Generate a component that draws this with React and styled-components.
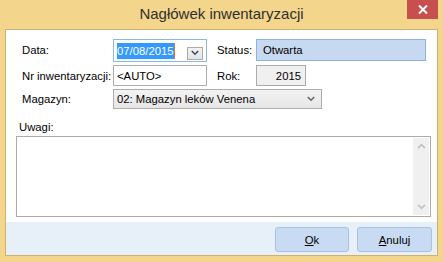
import React from 'react'
import styled, { createGlobalStyle } from 'styled-components'

const GlobalStyle = createGlobalStyle`
  html, body { margin: 0; padding: 0; }
  body {
    width: 443px;
    height: 262px;
    overflow: hidden;
    font-family: "Liberation Sans", Arial, sans-serif;
    font-size: 11.3px;
    color: #000;
  }
`

function Chevron({ up, color, size = 9 }) {
  return (
    <svg width={size} height={Math.round(size * 0.7)} viewBox="0 0 10 7">
      <path
        d={up ? 'M1 6 L5 2 L9 6' : 'M1 1 L5 5 L9 1'}
        fill="none"
        stroke={color}
        strokeWidth="2"
      />
    </svg>
  )
}

export default function App() {
  return (
    <Window>
      <GlobalStyle />
      <TitleBar>
        <Title>Nagłówek inwentaryzacji</Title>
        <Close>
          <svg width="10" height="9" viewBox="0 0 10 9">
            <path d="M1 0.5 L9 8.5 M9 0.5 L1 8.5" stroke="#fff" strokeWidth="2" />
          </svg>
        </Close>
      </TitleBar>

      <Panel>
        <Form>
          <Fields>
            <Label>Data:</Label>
            <DateBox>
              <Selected>07/08/2015</Selected>
              <DropButton>
                <Chevron color="#3f4d60" size={8} />
              </DropButton>
            </DateBox>
            <SideLabel>Status:</SideLabel>
            <StatusBox>Otwarta</StatusBox>

            <Label>Nr inwentaryzacji:</Label>
            <Input>&lt;AUTO&gt;</Input>
            <SideLabel>Rok:</SideLabel>
            <ReadOnly>2015</ReadOnly>

            <Label>Magazyn:</Label>
            <Select>
              <span>02: Magazyn leków Venena</span>
              <Chevron color="#666" size={8} />
            </Select>
          </Fields>

          <NotesLabel>Uwagi:</NotesLabel>
          <Notes>
            <Scrollbar>
              <Chevron up color="#c2c2c2" size={9} />
              <Chevron color="#c2c2c2" size={9} />
            </Scrollbar>
          </Notes>
        </Form>

        <Footer>
          <Button $w={74}><u>O</u>k</Button>
          <Button $w={75}><u>A</u>nuluj</Button>
        </Footer>
      </Panel>
    </Window>
  )
}

const Window = styled.div`
  width: 443px;
  height: 262px;
  background: #f3d68b;
  display: flex;
  flex-direction: column;
`

const TitleBar = styled.div`
  height: 29px;
  flex-shrink: 0;
  display: grid;
  grid-template-columns: 1fr auto 1fr;
  align-items: start;
`

const Title = styled.div`
  grid-column: 2;
  font-size: 15px;
  line-height: 28px;
  color: #2f2f2f;
`

const Close = styled.div`
  grid-column: 3;
  justify-self: end;
  margin-right: 5px;
  width: 31px;
  height: 19px;
  background: #c7504f;
  display: flex;
  align-items: center;
  justify-content: center;
`

const Panel = styled.div`
  flex: 1;
  margin: 0 5px 6px;
  border: 1px solid #cfb06c;
  display: flex;
  flex-direction: column;
  min-height: 0;
`

const Form = styled.div`
  flex: 1;
  background: #fff;
  padding: 8px 6px 0 10px;
`

const Fields = styled.div`
  margin-left: 6px;
  display: grid;
  grid-template-columns: 91px 94px 49px 170px;
  grid-template-rows: 24px 21px 20px;
  row-gap: 3px;
  align-items: center;
`

const Label = styled.div`
  line-height: 14px;
`

const SideLabel = styled(Label)`
  padding-left: 10px;
`

const Field = styled.div`
  box-sizing: border-box;
  height: ${p => p.$h || 21}px;
  display: flex;
  align-items: center;
  padding: 0 3px;
  border: 1px solid #abadb3;
  background: #fff;
  white-space: nowrap;
`

const DateBox = styled(Field)`
  height: 23px;
  border-color: #86b8ea;
  align-items: stretch;
  justify-content: space-between;
  padding: 3px 3px 0 3px;
`

const Selected = styled.span`
  align-self: flex-start;
  height: 16px;
  line-height: 16px;
  background: #3399ff;
  color: #fff;
  border-right: 1px solid #e0752f;
`

const DropButton = styled.div`
  align-self: flex-end;
  margin-bottom: 1px;
  width: 16px;
  height: 13px;
  box-sizing: border-box;
  border: 1px solid #acacac;
  background: linear-gradient(#f2f2f2, #e3e3e3);
  display: flex;
  align-items: center;
  justify-content: center;
`

const StatusBox = styled(Field)`
  height: 22px;
  padding-left: 6px;
  background: #c6d9f0;
  border-color: #8fb3e0;
`

const Input = styled(Field)``

const ReadOnly = styled(Field)`
  width: 50px;
  justify-content: flex-end;
  padding-right: 4px;
  background: #f0f0f0;
  border-color: #acacac;
`

const Select = styled(Field)`
  grid-column: 2 / 5;
  width: 209px;
  height: 20px;
  justify-content: space-between;
  padding-right: 6px;
  background: linear-gradient(#f3f3f3, #e6e6e6);
  border-color: #acacac;
`

const NotesLabel = styled.div`
  margin-top: 11px;
  line-height: 14px;
  padding-left: 3px;
`

const Notes = styled.div`
  box-sizing: border-box;
  margin-top: 2px;
  width: 415px;
  height: 81px;
  border: 1px solid #ababab;
  padding: 1px;
  display: flex;
  justify-content: flex-end;
`

const Scrollbar = styled.div`
  width: 16px;
  background: #f0f0f0;
  display: flex;
  flex-direction: column;
  justify-content: space-between;
  align-items: center;
  padding: 5px 0;
`

const Footer = styled.div`
  height: 33px;
  flex-shrink: 0;
  background: #e7eff9;
  display: flex;
  justify-content: flex-end;
  align-items: flex-start;
  gap: 8px;
  padding: 5px 5px 0 0;
  box-sizing: border-box;
`

const Button = styled.div`
  box-sizing: border-box;
  width: ${p => p.$w}px;
  height: 25px;
  border: 1px solid #a9c2e2;
  border-radius: 3px;
  background: #c9dbf3;
  display: flex;
  align-items: center;
  justify-content: center;
  color: #000;
`
